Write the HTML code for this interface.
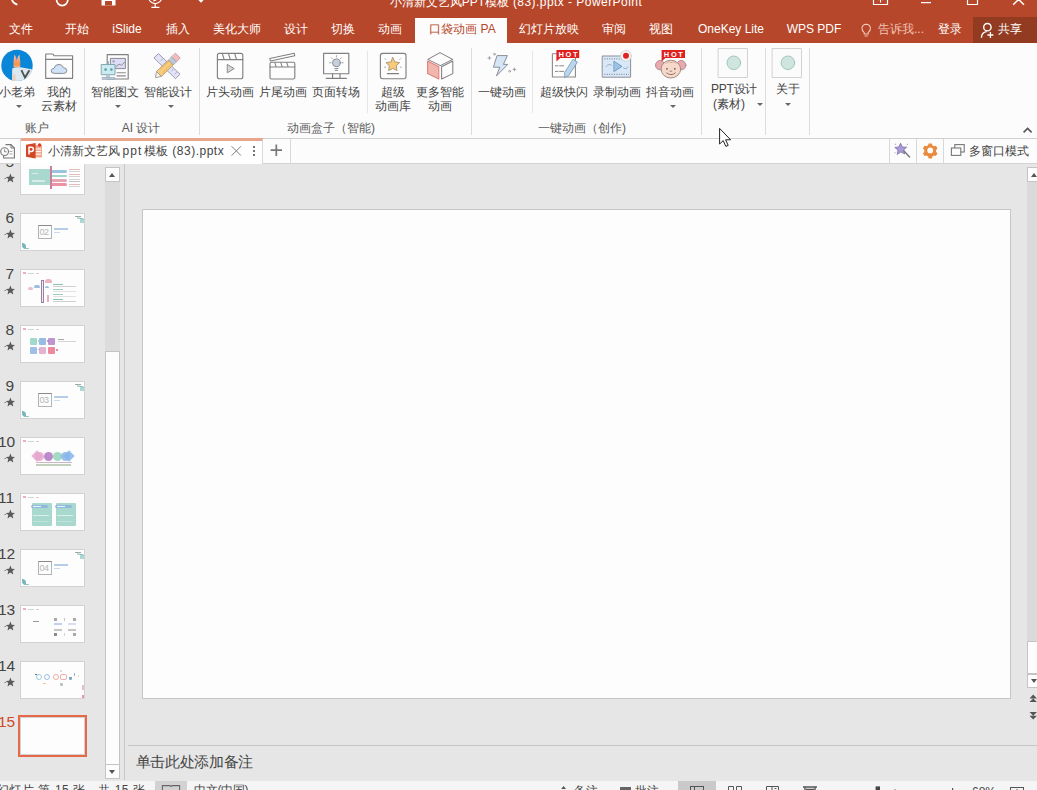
<!DOCTYPE html>
<html lang="zh">
<head>
<meta charset="utf-8">
<title>PowerPoint</title>
<style>
*{box-sizing:border-box;margin:0;padding:0}
html,body{width:1037px;height:790px;overflow:hidden}
body{position:relative;background:#e6e6e6;font-family:"Liberation Sans",sans-serif;font-size:12px;color:#444;}
.abs{position:absolute}
#top{position:absolute;left:0;top:0;width:1037px;height:44px;background:#b7472a;overflow:hidden;border-bottom:1px solid #dca697}
#title{position:absolute;left:-2.5px;top:-5px;width:1037px;text-align:center;color:#fff;font-size:12px;line-height:14px;white-space:nowrap}
.mt{position:absolute;top:17px;height:25px;line-height:24px;color:#fff;font-size:12px;white-space:nowrap;text-align:center;transform:translateX(-50%)}
#acttab{position:absolute;left:415px;top:18px;width:92px;height:26px;background:#fcfcfc}
#acttab span{position:absolute;left:1.5px;width:92px;top:-1px;line-height:24px;text-align:center;color:#b7472a;font-size:12px;white-space:nowrap}
#share{position:absolute;left:973px;top:17px;width:64px;height:27px;background:#923b20}
#ribbon{position:absolute;z-index:1;left:0;top:43px;width:1037px;height:96px;background:#fcfcfc;border-bottom:1px solid #d0d0d0;overflow:hidden}
.sep{position:absolute;top:5px;width:1px;height:87px;background:#dcdcdc}
.lbl{position:absolute;white-space:nowrap;text-align:center;transform:translateX(-50%);color:#444;font-size:12px;line-height:15px}
.glbl{position:absolute;top:78px;white-space:nowrap;text-align:center;transform:translateX(-50%);color:#5a5a5a;font-size:12px;line-height:15px}
.dd{position:absolute;width:0;height:0;border-left:3px solid transparent;border-right:3px solid transparent;border-top:3px solid #666}
#tabbar{position:absolute;left:0;top:138px;width:1037px;height:26px;background:#fcfcfc;border-bottom:1px solid #d4d4d4}
#doctab{position:absolute;z-index:2;left:21px;top:0;width:242px;height:26px;background:#fff;border-top:2px solid #e8a58c;border-right:1px solid #d9d9d9}
#panel{position:absolute;left:0;top:164px;width:124px;height:616px;background:#e6e6e6;overflow:hidden}
.th{position:absolute;left:20px;width:65px;height:38px;background:#fdfdfd;border:1px solid #d2d2d2;overflow:hidden}
.th>div{opacity:.85}
.num{position:absolute;font-size:15.5px;line-height:16px;color:#444;text-align:right;width:16px;left:-2px}
.star{position:absolute;left:3px;font-size:11px;line-height:12px;color:#555}
#vdiv{position:absolute;left:124px;top:164px;width:1px;height:616px;background:#c8c8c8}
#slide{position:absolute;left:142px;top:209px;width:869px;height:490px;background:#fdfdfd;border:1px solid #c6c6c6}
#notes{position:absolute;left:128px;top:745px;width:909px;height:36px;border-top:1px solid #c6c6c6;background:#e6e6e6}
#status{position:absolute;left:0;top:781px;width:1037px;height:9px;background:#f5f5f5;overflow:hidden}
</style>
</head>
<body>

<!-- ===== title + menu band ===== -->
<div id="top">
<svg class="abs" style="left:0;top:0" width="1037" height="12" viewBox="0 0 1037 12" fill="none">
    <path d="M11.5 -2 Q12.4 3.6 17.4 4.6" stroke="#fff" stroke-width="1.7"/>
    <path d="M56.6 0 A5.6 5.6 0 0 0 67.8 0" stroke="#fff" stroke-width="1.7"/>
    <path d="M101.5 -6 H115.5 V5.5 H101.5 Z" fill="#fff"/><rect x="105" y="1" width="7" height="4.5" fill="#b7472a"/>
    <path d="M148.6 -3 A6.6 6.6 0 0 0 161.8 -3" stroke="#fff" stroke-width="1.2"/><path d="M155.2 3.8 V7 M151.4 7.4 H159.4" stroke="#fff" stroke-width="1.2"/><path d="M153.4 -4 L158.6 -0.8 L153.4 1.8 Z" fill="#fff"/>
    <path d="M197.4 -1 H204.6 L201 2.8 Z" fill="#fff"/>
    <path d="M873.5 -6 H887.5 V4.5 H873.5 Z" stroke="#fff" stroke-width="1.2"/><path d="M880.5 -3 V2.4 M878 0 L880.5 -2.4 L883 0" stroke="#fff" stroke-width="1.1"/>
    <path d="M921 2.6 H931" stroke="#fff" stroke-width="1.3"/>
    <path d="M967.5 -6 H977.5 V4.5 H967.5 Z" stroke="#fff" stroke-width="1.2"/>
    <path d="M1018.6 -0.6 L1013.2 4.8 M1018.6 -0.6 L1024 4.8" stroke="#fff" stroke-width="1.5"/>
  </svg>
<svg class="abs" style="left:855px;top:18px;z-index:3" width="182" height="25" viewBox="855 18 182 25" fill="none">
    <path d="M864.2 32.6 Q861.8 30.6 862 28 Q862.4 24.4 866.2 24.2 Q870 24.4 870.4 28 Q870.6 30.6 868.2 32.6 V34 H864.2 Z M864.6 36 H867.8" stroke="#f3c9bc" stroke-width="1.1"/>
    <circle cx="987.4" cy="27.2" r="3.7" stroke="#fff" stroke-width="1.4"/>
    <path d="M981.4 37.8 Q981.6 32.2 986.6 31.6" stroke="#fff" stroke-width="1.4"/>
    <path d="M990.4 32 V38 M987.4 35 H993.4" stroke="#fff" stroke-width="1.3"/>
  </svg>
  <div id="title">小清新文艺风PPT模板<span style="letter-spacing:0.45px"> (83).pptx - PowerPoint</span></div>
  <div class="mt" style="left:21px">文件</div>
  <div class="mt" style="left:77px">开始</div>
  <div class="mt" style="left:127px">iSlide</div>
  <div class="mt" style="left:178px">插入</div>
  <div class="mt" style="left:237px">美化大师</div>
  <div class="mt" style="left:296px">设计</div>
  <div class="mt" style="left:343px">切换</div>
  <div class="mt" style="left:390px">动画</div>
  <div id="acttab"><span>口袋动画 PA</span></div>
  <div class="mt" style="left:549px">幻灯片放映</div>
  <div class="mt" style="left:614px">审阅</div>
  <div class="mt" style="left:661px">视图</div>
  <div class="mt" style="left:731px">OneKey Lite</div>
  <div class="mt" style="left:814px">WPS PDF</div>
  <div class="mt" style="left:901px;color:#f0c4b6">告诉我...</div>
  <div class="mt" style="left:950px">登录</div>
  <div id="share"><div class="mt" style="left:37px;top:0">共享</div></div>
</div>

<!-- ===== ribbon ===== -->
<div id="ribbon">
  <!-- separators (ribbon-local y = global-43) -->
  <div class="sep" style="left:84px"></div>
  <div class="sep" style="left:199px"></div>
  <div class="sep" style="left:367px;height:62px;top:8px;background:#e6e6e6"></div>
  <div class="sep" style="left:471px"></div>
  <div class="sep" style="left:532px;height:62px;top:8px;background:#e6e6e6"></div>
  <div class="sep" style="left:701px"></div>
  <div class="sep" style="left:765px"></div>
  <div class="sep" style="left:809px"></div>

  <!-- one big svg for all icons; coordinates = global x, global y-43 -->
  <svg class="abs" style="left:0;top:0" width="1037" height="96" viewBox="0 43 1037 96" fill="none" stroke-linejoin="round" stroke-linecap="round">
    <!-- avatar -->
    <defs><clipPath id="av"><circle cx="17" cy="65.4" r="15.7"/></clipPath>
    <linearGradient id="ear" x1="0" y1="0" x2="0" y2="1"><stop offset="0" stop-color="#f3d2c4"/><stop offset="0.3" stop-color="#f2ab92"/><stop offset="0.75" stop-color="#f89248"/><stop offset="1" stop-color="#f2b48c"/></linearGradient></defs>
    <circle cx="17" cy="65.4" r="15.7" fill="#0a86d8"/>
    <g clip-path="url(#av)">
      <path d="M13.5 67.6 Q13.2 59 14.6 54.4 Q16.4 57.4 16.8 60.4 Q17.6 56 19.4 54.4 Q20.6 60 20.2 67.6 Z" fill="url(#ear)"/>
      <path d="M12 82 L12.2 68.6 Q15.5 67 20.4 67.3 L33 69.4 L33 82 Z" fill="#dde8f1"/>
      <path d="M12.4 75.5 L15.2 73.4 L16.4 81.6 L12.2 82Z" fill="#ecd2bc"/>
      <path d="M27.6 79.6 L31 70.4 L33.4 69.6 L33.4 81 Z" fill="#e9dbe9"/>
      <path d="M21.4 70.2 L25 77.6 L29.4 70.2" stroke="#4d554d" stroke-width="1.9" fill="none" stroke-linejoin="miter" stroke-linecap="butt"/>
    </g>
    <!-- folder cloud -->
    <path d="M45.7 78.3 V54 H53 L54 55.7 H72.6 V78.3 Z" stroke="#808080" stroke-width="1.15" fill="#fdfdfd"/>
    <path d="M45.7 59.3 H72.6" stroke="#808080" stroke-width="1.15"/>
    <path d="M54.2 73.4 Q51 73.4 51.2 70.6 Q51.6 68.4 54 68.4 Q54.8 64.4 59 64.4 Q62.6 64.6 63.4 67.8 Q66.8 67.6 66.8 70.6 Q66.8 73.4 64 73.4 Z" fill="#cfe2f7" stroke="#8a8f96" stroke-width="1"/>
    <!-- smart graphic -->
    <rect x="107.2" y="54.6" width="21" height="24.4" stroke="#808080" stroke-width="1.15" fill="#fdfdfd"/>
    <rect x="110.8" y="58.4" width="14.6" height="10.2" fill="#dcdcf6" stroke="#8a8a92" stroke-width="1"/>
    <circle cx="113.6" cy="61.4" r="1.1" fill="#9a9aa6" stroke="none"/>
    <path d="M115.5 67 L119 64.2 L121.5 65.2 L125 62" stroke="#8a8a92" stroke-width="0.9"/>
    <path d="M117 72.8 H125.4 M117 75.9 H125.4" stroke="#8a8a8a" stroke-width="1.1"/>
    <rect x="101.6" y="64.5" width="13.4" height="10.2" fill="#c9ebf1" stroke="#86a7b0" stroke-width="1"/>
    <circle cx="105.6" cy="69.6" r="1.3" fill="#5ea39b" stroke="none"/>
    <circle cx="111.4" cy="69.6" r="1.3" fill="#5ea39b" stroke="none"/>
    <path d="M108.3 64.3 V61.6" stroke="#86a7b0" stroke-width="1"/>
    <rect x="106.8" y="74.8" width="3.2" height="2.8" fill="#b9cbd6" stroke="none"/>
    <rect x="102.4" y="77.4" width="12.2" height="2" fill="#b9c7d6" stroke="#8fa0b0" stroke-width="0.6"/>
    <!-- smart design: ruler + pencil -->
    <path d="M154.2 57.6 L158.4 53.6 L180 74.2 L175.8 78.4 Z" fill="#e2e2f8" stroke="#9a9aae" stroke-width="1"/>
    <path d="M161 60.5 l1.6 -1.6 M164.6 64 l1.6 -1.6 M171.6 70.8 l1.6 -1.6 M175 74 l1.4 -1.4" stroke="#9a9aae" stroke-width="0.8"/>
    <path d="M175.6 53.4 L180.2 58 L176.4 61.8 L171.8 57.2 Z" fill="#f4bcbc" stroke="#b89a9a" stroke-width="0.9"/>
    <path d="M171.8 57.2 L176.4 61.8 L173.2 65 L168.6 60.4 Z" fill="#bccadb" stroke="#9aa6b4" stroke-width="0.9"/>
    <path d="M168.6 60.4 L173.2 65 L161.4 76.4 L156.8 71.8 Z" fill="#f9cb7c" stroke="#b89a66" stroke-width="0.9"/>
    <path d="M160.2 69.2 L169.4 60.8 M163 72.4 L172.2 63.4" stroke="#d9a956" stroke-width="0.7"/>
    <path d="M156.8 71.8 L161.4 76.4 L155.8 77.6 Z" fill="#fbefe0" stroke="#9a9a9a" stroke-width="0.9"/>
    <!-- opening animation -->
    <rect x="217.4" y="53.3" width="25.4" height="25.4" rx="2" stroke="#808080" stroke-width="1.15" fill="#fdfdfd"/>
    <path d="M217.4 59.6 H242.8 M222.4 54 l1.6 5 M228.6 54 l1.6 5 M234.8 54 l1.6 5" stroke="#808080" stroke-width="1.05"/>
    <path d="M227.6 64.6 L234.2 68.6 L227.6 72.6 Z" fill="#d4d8dc" stroke="#8a8a8a" stroke-width="1"/>
    <!-- ending animation -->
    <rect x="270" y="62.2" width="24.8" height="16.8" rx="1.5" stroke="#808080" stroke-width="1.15" fill="#fdfdfd"/>
    <path d="M270 67 H294.8 M274.8 62.6 l1.3 4 M280.8 62.6 l1.3 4 M286.8 62.6 l1.3 4" stroke="#808080" stroke-width="1.05"/>
    <path d="M269.8 58.4 L294.2 53.2 L294.8 55.8 L270.4 61 Z" stroke="#808080" stroke-width="1.05" fill="#fdfdfd"/>
    <!-- page transition -->
    <rect x="323.6" y="53.3" width="25.2" height="20.4" stroke="#808080" stroke-width="1.15" fill="#fdfdfd"/>
    <path d="M332.6 73.8 V78.2 M340 73.8 V78.2 M326.2 78.4 H346.4" stroke="#808080" stroke-width="1.15"/>
    <circle cx="336.4" cy="62.8" r="3.9" fill="#c6d0dc" stroke="#8a8f96" stroke-width="1"/>
    <path d="M334.8 68.6 H338 M335.2 70.4 H337.6" stroke="#8a8f96" stroke-width="1"/>
    <path d="M329.6 62.8 h1.6 M341.6 62.8 h1.6 M331.4 57.8 l1.1 1.1 M341.4 57.8 l-1.1 1.1 M336.4 55.6 v1.4" stroke="#8a8f96" stroke-width="0.8"/>
    <!-- super library -->
    <rect x="380.4" y="53.3" width="25.6" height="25.4" rx="2.2" stroke="#808080" stroke-width="1.15" fill="#fdfdfd"/>
    <path d="M392.8 57.6 L394.9 62 L399.6 62.6 L396.2 65.9 L397 70.6 L392.8 68.4 L388.6 70.6 L389.4 65.9 L386 62.6 L390.7 62 Z" fill="#f8ca7c" stroke="#a8926a" stroke-width="0.9"/>
    <path d="M387.2 73.6 H398.6" stroke="#808080" stroke-width="1.05"/>
    <path d="M385 58.6 l1 1 M400.6 58.6 l-1 1 M384.4 67.2 h1.2 M400.2 67.2 h1.2" stroke="#9a9a9a" stroke-width="0.8"/>
    <!-- cube -->
    <path d="M427.8 59.4 L440 52.6 L452.6 59.4 L440.4 65.6 Z" stroke="#808080" stroke-width="1.05" fill="#fdfdfd"/>
    <path d="M427.6 61 L438.8 66.8 V79 L427.6 73.6 Z" fill="#f1b6ae" stroke="#e1827a" stroke-width="1.1"/>
    <path d="M441.6 66.8 L452.8 61 V73.6 L441.6 79 Z" fill="#fdfdfd" stroke="#808080" stroke-width="1.05"/>
    <!-- lightning -->
    <path d="M497.4 55.6 H507.4 L503.4 64.4 H507.8 L496.4 76 L499.8 67.2 H493.8 Z" fill="#d6e6f7" stroke="#8a8f96" stroke-width="1"/>
    <path d="M489.4 56.6 v2.8 M488 58 h2.8 M514.4 68 v2.8 M513 69.4 h2.8" stroke="#8a8f96" stroke-width="0.8"/>
    <circle cx="494.4" cy="54.2" r="0.9" stroke="#8a8f96" stroke-width="0.7"/>
    <circle cx="509.6" cy="71.2" r="0.9" stroke="#8a8f96" stroke-width="0.7"/>
    <!-- super flash -->
    <path d="M552.4 53.8 H575.4 V77 H552.4 Z" stroke="#8a8a8a" stroke-width="1.1" fill="#fdfdfd"/>
    <path d="M555.4 65.8 h2.6 m1.6 0 h4 M555.4 71.4 h2.6 m1.6 0 h4" stroke="#8a8a8a" stroke-width="1"/>
    <path d="M573.4 59.4 L577.4 62.2 L568.6 75.6 L564.8 77.6 L564.6 73 Z" fill="#b9d6ef" stroke="#7f9ab4" stroke-width="0.9"/>
    <path d="M556.4 50 H579.2 V58 H560.2 L556.4 61.4 Z" fill="#e1211f" stroke="none"/>
    <text x="568.8" y="56.7" font-family="Liberation Sans, sans-serif" font-weight="bold" font-size="7.4" fill="#fff" stroke="none" text-anchor="middle" letter-spacing="1.7">HOT</text>
    <!-- record animation -->
    <rect x="602.6" y="56" width="28" height="21.2" fill="#d8e8f8" stroke="#8a8f96" stroke-width="1"/>
    <path d="M604.4 58.8 H629 M604.4 74.4 H629" stroke="#8a8f96" stroke-width="1.2" stroke-dasharray="1 1.4" stroke-linecap="butt"/>
    <path d="M614.2 61.4 L622 66.4 L614.2 71.4 Z" fill="#9cc3e6" stroke="#6f96bc" stroke-width="0.9"/>
    <path d="M606.4 66.4 q2.4 -3 5.4 -1 M623.6 68 q2.6 2 4.4 -1.4" stroke="#7a94ae" stroke-width="0.8" stroke-dasharray="1 1"/>
    <circle cx="626" cy="55.8" r="5.4" fill="#f4f4f4" stroke="#cfcfcf" stroke-width="0.8"/>
    <circle cx="626" cy="55.8" r="3" fill="#e1211f" stroke="none"/>
    <!-- monkey -->
    <circle cx="660.2" cy="65.2" r="4.7" fill="#eaa8b0" stroke="#a88a84" stroke-width="0.9"/>
    <circle cx="681.2" cy="65.2" r="4.7" fill="#eaa8b0" stroke="#a88a84" stroke-width="0.9"/>
    <ellipse cx="670.9" cy="69.1" rx="9.8" ry="8.9" fill="#f7d9c9" stroke="#a88a84" stroke-width="1"/>
    <path d="M666 63.4 q1.4 -2.6 5 -0.8 q3.6 -1.8 5 0.8" stroke="#c8a090" stroke-width="0.8"/>
    <circle cx="667" cy="68.8" r="0.9" fill="#6a5a55" stroke="none"/>
    <circle cx="674.8" cy="68.8" r="0.9" fill="#6a5a55" stroke="none"/>
    <path d="M670 71.2 h1.8" stroke="#8a6a62" stroke-width="0.8"/>
    <path d="M666.6 73 q4.4 3.4 8.8 0" stroke="#8a6a62" stroke-width="0.9"/>
    <path d="M661.6 50 H685 V58 H665.4 L661.6 61.4 Z" fill="#e1211f" stroke="none"/>
    <text x="674.2" y="56.7" font-family="Liberation Sans, sans-serif" font-weight="bold" font-size="7.4" fill="#fff" stroke="none" text-anchor="middle" letter-spacing="1.7">HOT</text>
    <!-- PPT design / about -->
    <rect x="718.5" y="48.5" width="29" height="29" fill="#fbfbfb" stroke="#d2d2d2" stroke-width="1"/>
    <circle cx="733.8" cy="62.8" r="6.8" fill="#d0e5df" stroke="#9fc6ba" stroke-width="1"/>
    <rect x="772.5" y="48.5" width="29" height="29" fill="#fbfbfb" stroke="#d2d2d2" stroke-width="1"/>
    <circle cx="787.9" cy="62.8" r="6.8" fill="#d0e5df" stroke="#9fc6ba" stroke-width="1"/>
    <!-- collapse chevron -->
    <path d="M1023.6 132.4 L1027.6 128.4 L1031.6 132.4" stroke="#555" stroke-width="1.6" stroke-linecap="butt" stroke-linejoin="miter"/>
  </svg>

  <!-- labels (top = global centre y - 43 - 7.5) -->
  <div class="lbl" style="left:17px;top:42px">小老弟</div>
  <div class="dd" style="left:16px;top:62px"></div>
  <div class="lbl" style="left:59px;top:42px">我的</div>
  <div class="lbl" style="left:59px;top:56px">云素材</div>
  <div class="lbl" style="left:115px;top:42px">智能图文</div>
  <div class="dd" style="left:115px;top:62px"></div>
  <div class="lbl" style="left:168px;top:42px">智能设计</div>
  <div class="dd" style="left:168px;top:62px"></div>
  <div class="lbl" style="left:230px;top:42px">片头动画</div>
  <div class="lbl" style="left:283px;top:42px">片尾动画</div>
  <div class="lbl" style="left:336px;top:42px">页面转场</div>
  <div class="lbl" style="left:393px;top:42px">超级</div>
  <div class="lbl" style="left:393px;top:56px">动画库</div>
  <div class="lbl" style="left:440px;top:42px">更多智能</div>
  <div class="lbl" style="left:440px;top:56px">动画</div>
  <div class="lbl" style="left:502px;top:42px">一键动画</div>
  <div class="lbl" style="left:564px;top:42px">超级快闪</div>
  <div class="lbl" style="left:617px;top:42px">录制动画</div>
  <div class="lbl" style="left:670px;top:42px">抖音动画</div>
  <div class="dd" style="left:669.5px;top:62px"></div>
  <div class="lbl" style="left:734px;top:39px;letter-spacing:-0.3px">PPT设计</div>
  <div class="lbl" style="left:729px;top:54px">(素材)</div>
  <div class="dd" style="left:757px;top:60px"></div>
  <div class="lbl" style="left:788px;top:39px">关于</div>
  <div class="dd" style="left:785px;top:60px"></div>

  <div class="glbl" style="left:37px">账户</div>
  <div class="glbl" style="left:141px">AI 设计</div>
  <div class="glbl" style="left:331px">动画盒子（智能)</div>
  <div class="glbl" style="left:582px">一键动画（创作)</div>
</div>

<!-- ===== document tab bar ===== -->
<div id="tabbar">
  <div class="abs" style="left:0;top:0;width:21px;height:26px;border-right:1px solid #d9d9d9"></div>
  <svg class="abs" style="left:0;top:0" width="300" height="26" viewBox="0 138 300 26" fill="none">
    <!-- history doc icon -->
    <path d="M5.5 144.6 H11 L14.4 148 V158 H3.6 V156" stroke="#777" stroke-width="1.1"/>
    <path d="M11 144.6 V148 H14.4" stroke="#777" stroke-width="1"/>
    <path d="M9.6 151.4 H12.4 M9.6 154 H12.4" stroke="#999" stroke-width="0.9"/>
    <circle cx="4.6" cy="151.6" r="3.9" fill="#fcfcfc" stroke="#777" stroke-width="1.1"/>
    <path d="M4.6 149.4 V151.8 H6.6" stroke="#777" stroke-width="0.9"/>
  </svg>
  <div id="doctab" style="top:0;height:26px;border-top-width:3px">
    <svg class="abs" style="left:0;top:-3px" width="242" height="26" viewBox="21 138 242 26" fill="none">
      <!-- ppt icon -->
      <path d="M33.6 145 H42 V157.4 H33.6 Z" fill="#f0a78c"/>
      <path d="M34 149 H41 M34 151.6 H41 M34 154.2 H41" stroke="#fff" stroke-width="1"/>
      <path d="M26 144.8 L35.6 143 V158.6 L26 156.8 Z" fill="#d24625"/>
      <path d="M29 154.4 V147.2 H31.4 Q33.4 147.3 33.4 149.3 Q33.4 151.4 31.4 151.5 H29" stroke="#fff" stroke-width="1.5"/>
      <circle cx="39.6" cy="145" r="1.7" fill="#e53a1f"/>
      <!-- close x -->
      <path d="M231.6 146.2 L241 155.6 M241 146.2 L231.6 155.6" stroke="#808080" stroke-width="1"/>
      <!-- dots -->
      <circle cx="254" cy="147" r="1.1" fill="#555"/><circle cx="254" cy="151" r="1.1" fill="#555"/><circle cx="254" cy="155" r="1.1" fill="#555"/>
    </svg>
    <div class="abs" style="left:27px;top:1px;line-height:18px;font-size:12px;color:#444;white-space:nowrap" id="doctxt">小清新文艺风<span style="letter-spacing:1.1px;margin-left:2.5px;margin-right:1.5px">ppt</span>模板<span style="letter-spacing:0.5px;word-spacing:0.5px"> (83).pptx</span></div>
  </div>
  <div class="abs" style="left:263px;top:0;width:28px;height:26px;border-right:1px solid #d9d9d9">
    <svg class="abs" style="left:0;top:0" width="28" height="26" viewBox="263 138 28 26" fill="none"><path d="M270.6 150.2 H282 M276.3 144.5 V156" stroke="#777" stroke-width="1.7"/></svg>
  </div>
  <!-- right tools -->
  <div class="abs" style="left:889px;top:0;width:1px;height:25px;background:#d8d8d8"></div>
  <div class="abs" style="left:916px;top:0;width:1px;height:25px;background:#d8d8d8"></div>
  <div class="abs" style="left:943px;top:0;width:1px;height:25px;background:#d8d8d8"></div>
  <svg class="abs" style="left:889px;top:0" width="148" height="26" viewBox="889 138 148 26" fill="none">
    <path d="M900.6 143.2 L902.4 147 L906.6 147.2 L903.6 150 L904.8 154 L900.8 152 L897.2 154.4 L898 150.2 L894.8 147.4 L898.8 147 Z" fill="#a89ad8" stroke="#7a70a8" stroke-width="0.8" stroke-linejoin="round"/>
    <path d="M904 151 L909.6 157" stroke="#777" stroke-width="1.4" stroke-linecap="round"/>
    <path d="M895.6 143.6 v1.4 M907.4 143.8 v1.2 M894.4 152.8 h1.2" stroke="#9a90c8" stroke-width="0.8"/>
    <g transform="translate(930.2 150.4)">
      <path d="M-1.6 -7 h3.2 l0.5 1.9 l1.7 1 l1.9 -0.55 l1.6 2.75 l-1.4 1.4 v2 l1.4 1.4 l-1.6 2.75 l-1.9 -0.55 l-1.7 1 l-0.5 1.9 h-3.2 l-0.5 -1.9 l-1.7 -1 l-1.9 0.55 l-1.6 -2.75 l1.4 -1.4 v-2 l-1.4 -1.4 l1.6 -2.75 l1.9 0.55 l1.7 -1 Z" fill="#e98a3c"/>
      <circle r="2.9" fill="#fcfcfc"/>
    </g>
    <rect x="954.8" y="144.6" width="9.4" height="7.4" stroke="#777" stroke-width="1.1" fill="#fcfcfc"/>
    <rect x="951.4" y="148" width="9.4" height="7.4" stroke="#777" stroke-width="1.1" fill="#fcfcfc"/>
  </svg>
  <div class="abs" style="left:969px;top:4px;line-height:18px;font-size:12px;color:#444;white-space:nowrap">多窗口模式</div>
</div>

<!-- ===== thumbnails panel ===== -->
<div id="panel">
<div class="th" style="top:-7px"><div class="abs" style="left:8px;top:11px;width:21px;height:16px;background:#9ad1c6"></div>
<div class="abs" style="left:29px;top:8px;width:2px;height:23px;background:#c06a88"></div>
<div class="abs" style="left:31px;top:11.5px;width:15px;height:3px;background:#8bb9da;border-radius:0 2px 2px 0"></div>
<div class="abs" style="left:31px;top:16.5px;width:15px;height:2.5px;background:#92cfc2;border-radius:0 2px 2px 0"></div>
<div class="abs" style="left:31px;top:20.5px;width:15px;height:3px;background:#e295a6;border-radius:0 2px 2px 0"></div>
<div class="abs" style="left:31px;top:25px;width:15px;height:3px;background:#ea7f95;border-radius:0 2px 2px 0"></div>
<div class="abs" style="left:48px;top:11px;width:11px;height:1px;background:#e0b0b0;box-shadow:0 2px 0 #ccc,0 5px 0 #e0b0b0,0 7px 0 #ccc,0 10px 0 #ccc,0 12px 0 #bbb,0 15px 0 #e0b0b0,0 17px 0 #ccc"></div>
<div class="abs" style="left:11px;top:15px;width:6px;height:1px;background:#dff0ec"></div><div class="abs" style="left:11px;top:22px;width:13px;height:1.5px;background:#dff0ec"></div></div>
<div class="num" style="top:-10px;color:#444">5</div>
<svg class="abs" style="left:3.5px;top:9px" width="12" height="10" viewBox="0 0 12 10"><path d="M6.4 0.6 L7.7 3.7 L11 4 L8.5 6.1 L9.3 9.4 L6.4 7.6 L3.5 9.4 L4.3 6.1 L1.8 4 L5.1 3.7 Z" fill="#5a5a5a"/><rect x="0.6" y="5" width="1.2" height="1" fill="#666"/></svg>
<div class="th" style="top:49px"><div class="abs" style="left:17px;top:11px;width:14px;height:14px;border:0.6px solid #a8a8a8;border-top:1px solid #777"></div><div class="abs" style="left:18.5px;top:13px;font-size:9px;line-height:10px;color:#aaa;letter-spacing:-0.5px">02</div><div class="abs" style="left:33px;top:13.5px;width:14px;height:2px;background:#a8c4e4"></div><div class="abs" style="left:33px;top:17.5px;width:6px;height:1px;background:#c4d4ea"></div><div class="abs" style="left:54px;top:1.5px;width:6px;height:1px;background:#999"></div><div class="abs" style="left:56px;top:4px;width:7px;height:1.2px;background:#6aa;transform:rotate(12deg)"></div><div class="abs" style="left:59px;top:5px;width:4px;height:3.5px;background:#8fc8c0;opacity:.7"></div><div class="abs" style="left:1px;top:29px;width:4px;height:6px;background:#5fa8b0;border-radius:0 4px 0 4px"></div><div class="abs" style="left:5px;top:34px;width:3px;height:1px;background:#8bb"></div></div>
<div class="num" style="top:46px;color:#444">6</div>
<svg class="abs" style="left:3.5px;top:65px" width="12" height="10" viewBox="0 0 12 10"><path d="M6.4 0.6 L7.7 3.7 L11 4 L8.5 6.1 L9.3 9.4 L6.4 7.6 L3.5 9.4 L4.3 6.1 L1.8 4 L5.1 3.7 Z" fill="#5a5a5a"/><rect x="0.6" y="5" width="1.2" height="1" fill="#666"/></svg>
<div class="th" style="top:105px"><div class="abs" style="left:1.5px;top:1.5px;width:3px;height:2.5px;background:#f0a0b0"></div><div class="abs" style="left:7px;top:3px;width:6px;height:1px;background:#b8d4cc"></div><div class="abs" style="left:15px;top:3px;width:3px;height:1px;background:#e8c0c0"></div><div class="abs" style="left:20px;top:10px;width:2.5px;height:23px;border:0.7px solid #8a6a90;background:#f4e8f0"></div>
<div class="abs" style="left:24px;top:9px;width:7px;height:3.5px;background:#e9a4b4;border-radius:3px 3px 1px 1px"></div>
<div class="abs" style="left:12.5px;top:14.5px;width:6px;height:3px;background:#8ab2da;border-radius:3px 3px 1px 1px"></div>
<div class="abs" style="left:7px;top:17px;width:4.5px;height:2.5px;background:#e8b4c0;border-radius:2px 2px 1px 1px"></div>
<div class="abs" style="left:24px;top:16px;width:4px;height:2px;background:#8ab2da;border-radius:2px 2px 0 0"></div>
<div class="abs" style="left:26px;top:25px;width:1.5px;height:7px;background:#e8a0b0"></div>
<div class="abs" style="left:32px;top:13.5px;width:10px;height:1.2px;background:#78b8a8;box-shadow:0 5px 0 #8cc4b6,0 10px 0 #8cc4b6,0 15px 0 #78b8a8"></div>
<div class="abs" style="left:32px;top:15.5px;width:23px;height:1px;background:#c8c8c8;box-shadow:0 5px 0 #ddd,0 10px 0 #ddd,0 15px 0 #c8c8c8"></div></div>
<div class="num" style="top:102px;color:#444">7</div>
<svg class="abs" style="left:3.5px;top:121px" width="12" height="10" viewBox="0 0 12 10"><path d="M6.4 0.6 L7.7 3.7 L11 4 L8.5 6.1 L9.3 9.4 L6.4 7.6 L3.5 9.4 L4.3 6.1 L1.8 4 L5.1 3.7 Z" fill="#5a5a5a"/><rect x="0.6" y="5" width="1.2" height="1" fill="#666"/></svg>
<div class="th" style="top:161px"><div class="abs" style="left:1.5px;top:1.5px;width:3px;height:2.5px;background:#f0a0b0"></div><div class="abs" style="left:7px;top:3px;width:6px;height:1px;background:#b8d4cc"></div><div class="abs" style="left:15px;top:3px;width:3px;height:1px;background:#e8c0c0"></div><div class="abs" style="left:8.5px;top:11.5px;width:7px;height:7px;background:#92d2c2;border-radius:1px"></div>
<div class="abs" style="left:18px;top:11.5px;width:7px;height:7px;background:#86aee2;border-radius:1px"></div>
<div class="abs" style="left:27px;top:11.5px;width:7px;height:7px;background:#b084c4;border-radius:1px"></div>
<div class="abs" style="left:8.5px;top:20.5px;width:7px;height:7px;background:#8cb4e4;border-radius:1px"></div>
<div class="abs" style="left:18px;top:20.5px;width:7px;height:7px;background:#e2a4ca;border-radius:1px"></div>
<div class="abs" style="left:27px;top:20.5px;width:7px;height:7px;background:#ea748c;border-radius:1px"></div>
<div class="abs" style="left:16.5px;top:14px;width:2.5px;height:2px;background:#92d2c2"></div><div class="abs" style="left:26px;top:14px;width:2px;height:2px;background:#b084c4"></div><div class="abs" style="left:35px;top:23px;width:2px;height:2px;background:#ea748c"></div><div class="abs" style="left:16.5px;top:23px;width:2.5px;height:1px;background:#8cb4e4"></div>
<div class="abs" style="left:37px;top:12.5px;width:6px;height:1px;background:#999"></div><div class="abs" style="left:37px;top:14.5px;width:18px;height:1px;background:#ccc"></div></div>
<div class="num" style="top:158px;color:#444">8</div>
<svg class="abs" style="left:3.5px;top:177px" width="12" height="10" viewBox="0 0 12 10"><path d="M6.4 0.6 L7.7 3.7 L11 4 L8.5 6.1 L9.3 9.4 L6.4 7.6 L3.5 9.4 L4.3 6.1 L1.8 4 L5.1 3.7 Z" fill="#5a5a5a"/><rect x="0.6" y="5" width="1.2" height="1" fill="#666"/></svg>
<div class="th" style="top:217px"><div class="abs" style="left:17px;top:11px;width:14px;height:14px;border:0.6px solid #a8a8a8;border-top:1px solid #777"></div><div class="abs" style="left:18.5px;top:13px;font-size:9px;line-height:10px;color:#aaa;letter-spacing:-0.5px">03</div><div class="abs" style="left:33px;top:13.5px;width:14px;height:2px;background:#a8c4e4"></div><div class="abs" style="left:33px;top:17.5px;width:6px;height:1px;background:#c4d4ea"></div><div class="abs" style="left:54px;top:1.5px;width:6px;height:1px;background:#999"></div><div class="abs" style="left:56px;top:4px;width:7px;height:1.2px;background:#6aa;transform:rotate(12deg)"></div><div class="abs" style="left:59px;top:5px;width:4px;height:3.5px;background:#8fc8c0;opacity:.7"></div><div class="abs" style="left:1px;top:29px;width:4px;height:6px;background:#5fa8b0;border-radius:0 4px 0 4px"></div><div class="abs" style="left:5px;top:34px;width:3px;height:1px;background:#8bb"></div></div>
<div class="num" style="top:214px;color:#444">9</div>
<svg class="abs" style="left:3.5px;top:233px" width="12" height="10" viewBox="0 0 12 10"><path d="M6.4 0.6 L7.7 3.7 L11 4 L8.5 6.1 L9.3 9.4 L6.4 7.6 L3.5 9.4 L4.3 6.1 L1.8 4 L5.1 3.7 Z" fill="#5a5a5a"/><rect x="0.6" y="5" width="1.2" height="1" fill="#666"/></svg>
<div class="th" style="top:273px"><div class="abs" style="left:1.5px;top:1.5px;width:3px;height:2.5px;background:#f0a0b0"></div><div class="abs" style="left:7px;top:3px;width:6px;height:1px;background:#b8d4cc"></div><div class="abs" style="left:15px;top:3px;width:3px;height:1px;background:#e8c0c0"></div><div class="abs" style="left:12px;top:14px;width:8px;height:8px;background:#e4a6cc;transform:rotate(45deg)"></div>
<div class="abs" style="left:44px;top:14px;width:8px;height:8px;background:#86b4ea;transform:rotate(45deg)"></div>
<div class="abs" style="left:14px;top:13.5px;width:9px;height:9px;border-radius:50%;background:#e4a6cc"></div>
<div class="abs" style="left:22.5px;top:13.5px;width:9px;height:9px;border-radius:50%;background:#b274c4"></div>
<div class="abs" style="left:31.5px;top:13.5px;width:9px;height:9px;border-radius:50%;background:#94d2ba"></div>
<div class="abs" style="left:40px;top:13.5px;width:9px;height:9px;border-radius:50%;background:#86b4ea"></div>
<div class="abs" style="left:15px;top:24px;width:36px;height:1px;background:#c8a8b8"></div><div class="abs" style="left:15px;top:26px;width:35px;height:1.5px;background:#b8c8b0"></div></div>
<div class="num" style="top:270px;color:#444">10</div>
<svg class="abs" style="left:3.5px;top:289px" width="12" height="10" viewBox="0 0 12 10"><path d="M6.4 0.6 L7.7 3.7 L11 4 L8.5 6.1 L9.3 9.4 L6.4 7.6 L3.5 9.4 L4.3 6.1 L1.8 4 L5.1 3.7 Z" fill="#5a5a5a"/><rect x="0.6" y="5" width="1.2" height="1" fill="#666"/></svg>
<div class="th" style="top:329px"><div class="abs" style="left:1.5px;top:1.5px;width:3px;height:2.5px;background:#f0a0b0"></div><div class="abs" style="left:7px;top:3px;width:6px;height:1px;background:#b8d4cc"></div><div class="abs" style="left:15px;top:3px;width:3px;height:1px;background:#e8c0c0"></div><div class="abs" style="left:10.5px;top:9px;width:20px;height:23px;background:#9ad1c6;border-radius:1px"></div>
<div class="abs" style="left:34.5px;top:9px;width:20px;height:23px;background:#9ad1c6;border-radius:1px"></div>
<div class="abs" style="left:9.5px;top:10.5px;width:17px;height:3px;background:#8cb4e2;border-radius:1.5px"></div>
<div class="abs" style="left:33.5px;top:10.5px;width:17px;height:3px;background:#8cb4e2;border-radius:1.5px"></div>
<div class="abs" style="left:12px;top:11.5px;width:8px;height:1px;background:#fff"></div><div class="abs" style="left:36px;top:11.5px;width:8px;height:1px;background:#fff"></div>
<div class="abs" style="left:12px;top:20.5px;width:16px;height:1.5px;background:#e4f4f0"></div><div class="abs" style="left:36px;top:20.5px;width:16px;height:1.5px;background:#e4f4f0"></div>
<div class="abs" style="left:12px;top:27px;width:16px;height:1px;background:#c4e6de"></div><div class="abs" style="left:36px;top:27px;width:16px;height:1px;background:#c4e6de"></div></div>
<div class="num" style="top:326px;color:#444">11</div>
<svg class="abs" style="left:3.5px;top:345px" width="12" height="10" viewBox="0 0 12 10"><path d="M6.4 0.6 L7.7 3.7 L11 4 L8.5 6.1 L9.3 9.4 L6.4 7.6 L3.5 9.4 L4.3 6.1 L1.8 4 L5.1 3.7 Z" fill="#5a5a5a"/><rect x="0.6" y="5" width="1.2" height="1" fill="#666"/></svg>
<div class="th" style="top:385px"><div class="abs" style="left:17px;top:11px;width:14px;height:14px;border:0.6px solid #a8a8a8;border-top:1px solid #777"></div><div class="abs" style="left:18.5px;top:13px;font-size:9px;line-height:10px;color:#aaa;letter-spacing:-0.5px">04</div><div class="abs" style="left:33px;top:13.5px;width:14px;height:2px;background:#a8c4e4"></div><div class="abs" style="left:33px;top:17.5px;width:6px;height:1px;background:#c4d4ea"></div><div class="abs" style="left:54px;top:1.5px;width:6px;height:1px;background:#999"></div><div class="abs" style="left:56px;top:4px;width:7px;height:1.2px;background:#6aa;transform:rotate(12deg)"></div><div class="abs" style="left:59px;top:5px;width:4px;height:3.5px;background:#8fc8c0;opacity:.7"></div><div class="abs" style="left:1px;top:29px;width:4px;height:6px;background:#5fa8b0;border-radius:0 4px 0 4px"></div><div class="abs" style="left:5px;top:34px;width:3px;height:1px;background:#8bb"></div></div>
<div class="num" style="top:382px;color:#444">12</div>
<svg class="abs" style="left:3.5px;top:401px" width="12" height="10" viewBox="0 0 12 10"><path d="M6.4 0.6 L7.7 3.7 L11 4 L8.5 6.1 L9.3 9.4 L6.4 7.6 L3.5 9.4 L4.3 6.1 L1.8 4 L5.1 3.7 Z" fill="#5a5a5a"/><rect x="0.6" y="5" width="1.2" height="1" fill="#666"/></svg>
<div class="th" style="top:441px"><div class="abs" style="left:1.5px;top:1.5px;width:3px;height:2.5px;background:#f0a0b0"></div><div class="abs" style="left:7px;top:3px;width:6px;height:1px;background:#b8d4cc"></div><div class="abs" style="left:15px;top:3px;width:3px;height:1px;background:#e8c0c0"></div><div class="abs" style="left:12px;top:14.5px;width:6px;height:1px;background:#888"></div>
<div class="abs" style="left:32.5px;top:12px;width:3px;height:2.5px;background:#9a9a9a"></div><div class="abs" style="left:51.5px;top:12px;width:3px;height:2.5px;background:#9a9a9a"></div>
<div class="abs" style="left:32.5px;top:27px;width:3px;height:2.5px;background:#777"></div><div class="abs" style="left:51.5px;top:27px;width:3px;height:2.5px;background:#9a9a9a"></div>
<div class="abs" style="left:42.5px;top:11.5px;width:1px;height:3px;background:#bbb"></div><div class="abs" style="left:42.5px;top:27px;width:1px;height:3px;background:#ccc"></div>
<div class="abs" style="left:32.5px;top:17px;width:8px;height:2px;background:#b8c8e8"></div><div class="abs" style="left:47px;top:17px;width:8px;height:2px;background:#d0d8e8"></div>
<div class="abs" style="left:32.5px;top:23px;width:8px;height:1.5px;background:#bbb"></div><div class="abs" style="left:47px;top:23px;width:8px;height:1.5px;background:#bbb"></div></div>
<div class="num" style="top:438px;color:#444">13</div>
<svg class="abs" style="left:3.5px;top:457px" width="12" height="10" viewBox="0 0 12 10"><path d="M6.4 0.6 L7.7 3.7 L11 4 L8.5 6.1 L9.3 9.4 L6.4 7.6 L3.5 9.4 L4.3 6.1 L1.8 4 L5.1 3.7 Z" fill="#5a5a5a"/><rect x="0.6" y="5" width="1.2" height="1" fill="#666"/></svg>
<div class="th" style="top:497px"><div class="abs" style="left:15px;top:11.5px;width:6px;height:6.5px;border:0.8px solid #8cc4dc;border-radius:3px"></div>
<div class="abs" style="left:23px;top:11.5px;width:6px;height:6.5px;border:0.8px solid #8cb0e0;border-radius:3px"></div>
<div class="abs" style="left:32px;top:11.5px;width:6px;height:6.5px;border:0.8px solid #e8a098;border-radius:3px"></div>
<div class="abs" style="left:39px;top:11.5px;width:6.5px;height:6.5px;border:0.8px solid #e8a0a0;border-radius:2px"></div>
<div class="abs" style="left:13.5px;top:11.5px;width:2px;height:1.5px;background:#555"></div>
<div class="abs" style="left:47.5px;top:15px;width:3px;height:3px;background:#5a9ab8;border-radius:0 0 2px 2px"></div>
<div class="abs" style="left:22px;top:20.5px;width:3px;height:1.5px;background:#f0c060"></div><div class="abs" style="left:39px;top:7.5px;width:2px;height:2px;background:#bcd;border-radius:1px"></div>
<div class="abs" style="left:39px;top:21px;width:2.5px;height:2.5px;background:#a8b8b8;border-radius:1px"></div><div class="abs" style="left:52.5px;top:11px;width:1px;height:2.5px;background:#7aa8d0"></div>
<div class="abs" style="left:56.5px;top:13px;width:1px;height:2px;background:#f0d8a0"></div><div class="abs" style="left:61px;top:23px;width:1.5px;height:5px;background:#e8b0b8"></div><div class="abs" style="left:60.5px;top:33px;width:3px;height:3px;background:#e88098"></div></div>
<div class="num" style="top:494px;color:#444">14</div>
<svg class="abs" style="left:3.5px;top:513px" width="12" height="10" viewBox="0 0 12 10"><path d="M6.4 0.6 L7.7 3.7 L11 4 L8.5 6.1 L9.3 9.4 L6.4 7.6 L3.5 9.4 L4.3 6.1 L1.8 4 L5.1 3.7 Z" fill="#5a5a5a"/><rect x="0.6" y="5" width="1.2" height="1" fill="#666"/></svg>
<div class="abs" style="left:18px;top:551px;width:69px;height:42px;background:#e8694a"></div>
<div class="th" style="top:553px"></div>
<div class="num" style="top:550px;color:#d04a2a">15</div>
<div class="abs" style="left:105px;top:3px;width:15px;height:610px;background:#dcdcdc"></div>
<div class="abs" style="left:105px;top:3px;width:15px;height:15px;background:#fdfdfd;border:1px solid #c4c4c4"></div>
<div class="abs" style="left:109px;top:9px;width:0;height:0;border-left:3.5px solid transparent;border-right:3.5px solid transparent;border-bottom:4px solid #555"></div>
<div class="abs" style="left:105px;top:187px;width:15px;height:414px;background:#fdfdfd;border:1px solid #c4c4c4"></div>
<div class="abs" style="left:105px;top:600px;width:15px;height:15px;background:#fdfdfd;border:1px solid #c4c4c4"></div>
<div class="abs" style="left:109px;top:606px;width:0;height:0;border-left:3.5px solid transparent;border-right:3.5px solid transparent;border-top:4px solid #555"></div>
</div>
<div id="vdiv"></div>

<!-- ===== slide ===== -->
<div id="slide"></div>

<!-- ===== notes ===== -->
<div id="notes"><div class="abs" style="left:7.5px;top:7px;font-size:15px;letter-spacing:-0.3px;line-height:18px;color:#444;white-space:nowrap">单击此处添加备注</div></div>

<!-- ===== status bar ===== -->
<div id="status">
  <div class="abs" style="left:155px;top:0;width:32px;height:10px;background:#d2d2d2"></div>
  <div class="abs" style="left:-3px;top:2px;font-size:12px;line-height:14px;color:#444;white-space:nowrap;letter-spacing:0.3px;word-spacing:0.8px">幻灯片 第 15 张，共 15 张</div>
  <svg class="abs" style="left:158px;top:0" width="26" height="10" viewBox="158 781 26 10" fill="none"><path d="M162.4 791 V785.6 H169.6 Q171 785.6 171 787 Q171 785.6 172.4 785.6 H179.6 V791" stroke="#666" stroke-width="1.1"/></svg>
  <div class="abs" style="left:194px;top:2px;font-size:12px;line-height:14px;color:#444;white-space:nowrap;letter-spacing:-0.3px">中文(中国)</div>
  <svg class="abs" style="left:555px;top:0" width="20" height="10" viewBox="555 781 20 10"><path d="M561.2 789 L563.6 786 L566 789 Z" fill="#555"/></svg>
  <div class="abs" style="left:574px;top:3px;font-size:12px;line-height:14px;color:#444;white-space:nowrap">备注</div>
  <div class="abs" style="left:620px;top:6px;width:11px;height:6px;background:#666"></div>
  <div class="abs" style="left:635px;top:3px;font-size:12px;line-height:14px;color:#444;white-space:nowrap">批注</div>
  <div class="abs" style="left:678px;top:0;width:38px;height:10px;background:#c9c9c9"></div>
  <svg class="abs" style="left:680px;top:0" width="357" height="10" viewBox="680 781 357 10" fill="none">
    <rect x="690.5" y="786.5" width="13" height="8" stroke="#555" stroke-width="1"/><path d="M694.5 786.5 V790" stroke="#555"/>
    <path d="M728.5 790 V786.5 H733.5 V790 M736.5 790 V786.5 H741.5 V790" stroke="#555" stroke-width="1"/>
    <path d="M766.5 790 V786.5 H772 V790 M772 786.5 H778.5 V790 M774.5 788.5 H776.5" stroke="#555" stroke-width="1"/>
    <path d="M803 787 H817 M805 787 V790 M815 787 V790 M806 789.5 H814" stroke="#555" stroke-width="1.4"/>
    <rect x="875.6" y="786.4" width="4.4" height="5" fill="#444"/>
    <path d="M895 789 V790" stroke="#777" stroke-width="1"/>
    <path d="M952.6 788 V790" stroke="#555" stroke-width="1.2"/>
    <rect x="1010.5" y="787.5" width="13" height="6" stroke="#555" stroke-width="1"/><path d="M1017 789 V790" stroke="#555"/>
  </svg>
  <div class="abs" style="left:972px;top:4px;font-size:12px;line-height:14px;color:#444;white-space:nowrap">68%</div>
</div>
<!-- right scrollbar -->
<div class="abs" style="left:1027px;top:167px;width:10px;height:521px;background:#dadada"></div>
<div class="abs" style="left:1027px;top:167px;width:12px;height:15px;background:#fdfdfd;border:1px solid #c4c4c4"></div>
<div class="abs" style="left:1031px;top:173px;width:0;height:0;border-left:3.5px solid transparent;border-right:3.5px solid transparent;border-bottom:4px solid #555"></div>
<div class="abs" style="left:1027px;top:641px;width:12px;height:33px;background:#fdfdfd;border:1px solid #c4c4c4"></div>
<div class="abs" style="left:1027px;top:674px;width:12px;height:14px;background:#fdfdfd;border:1px solid #c4c4c4"></div>
<div class="abs" style="left:1031px;top:679px;width:0;height:0;border-left:3.5px solid transparent;border-right:3.5px solid transparent;border-top:4px solid #555"></div>
<svg class="abs" style="left:1027px;top:692px" width="10" height="30" viewBox="1027 692 10 30"><path d="M1029.5 698.4 L1033.2 694.6 L1037 698.4 Z M1029.5 702 L1033.2 698.4 L1037 702 Z" fill="#555"/><path d="M1029.5 712 L1037 712 L1033.2 715.8 Z M1029.5 715.8 L1037 715.8 L1033.2 719.6 Z" fill="#555"/></svg>
<svg class="abs" style="left:717px;top:126px;z-index:9" width="18" height="24" viewBox="717 126 18 24"><path d="M719.6 128.4 V144 L723.2 140.6 L725.8 146.4 L728.2 145.4 L725.6 139.8 H730.6 Z" fill="#fff" stroke="#222" stroke-width="1" stroke-linejoin="miter"/></svg>

</body>
</html>
